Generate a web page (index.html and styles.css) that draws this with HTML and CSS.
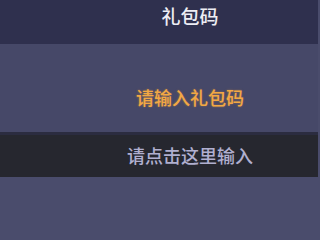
FILE: index.html
```html
<!DOCTYPE html>
<html lang="zh-CN">
<head>
<meta charset="utf-8">
<title>礼包码</title>
<link rel="stylesheet" href="styles.css">
</head>
<body>
<div class="page">
  <header class="header"><span class="title">礼包码</span></header>
  <section class="main"><span class="prompt">请输入礼包码</span></section>
  <div class="input-bar"><span class="placeholder">请点击这里输入</span></div>
  <div class="bottom"></div>
</div>
</body>
</html>
```
FILE: styles.css
```css
html, body {
  margin: 0;
  padding: 0;
  background: #4a4c6c;
}
.page {
  width: 318px;
  height: 221px;
  display: flex;
  flex-direction: column;
  font-family: "Noto Sans CJK SC", "Noto Sans", sans-serif;
  font-weight: 500;
  overflow: hidden;
}
.header {
  height: 44px;
  flex: none;
  background: #2f304e;
  display: flex;
  align-items: center;
  justify-content: center;
  padding-left: 62px;
  box-sizing: border-box;
}
.title {
  font-size: 19px;
  line-height: 24px;
  color: #ededf4;
  margin-top: -13px;
}
.main {
  height: 88px;
  flex: none;
  background: #464868;
  display: flex;
  justify-content: center;
  padding-left: 62px;
  padding-top: 41px;
  box-sizing: border-box;
}
.prompt {
  font-size: 18px;
  line-height: 24px;
  color: #f2a844;
  text-shadow: 0 0 2px rgba(240, 160, 60, 0.5);
}
.input-bar {
  height: 45px;
  flex: none;
  background: #26272f;
  border-top: 3px solid #2b2c40;
  box-sizing: border-box;
  display: flex;
  align-items: center;
  justify-content: center;
  padding-left: 62px;
}
.placeholder {
  font-size: 18px;
  line-height: 24px;
  color: #b0afcf;
  margin-top: -3px;
}
.bottom {
  flex: 1;
  background: #4a4c6c;
}
```
